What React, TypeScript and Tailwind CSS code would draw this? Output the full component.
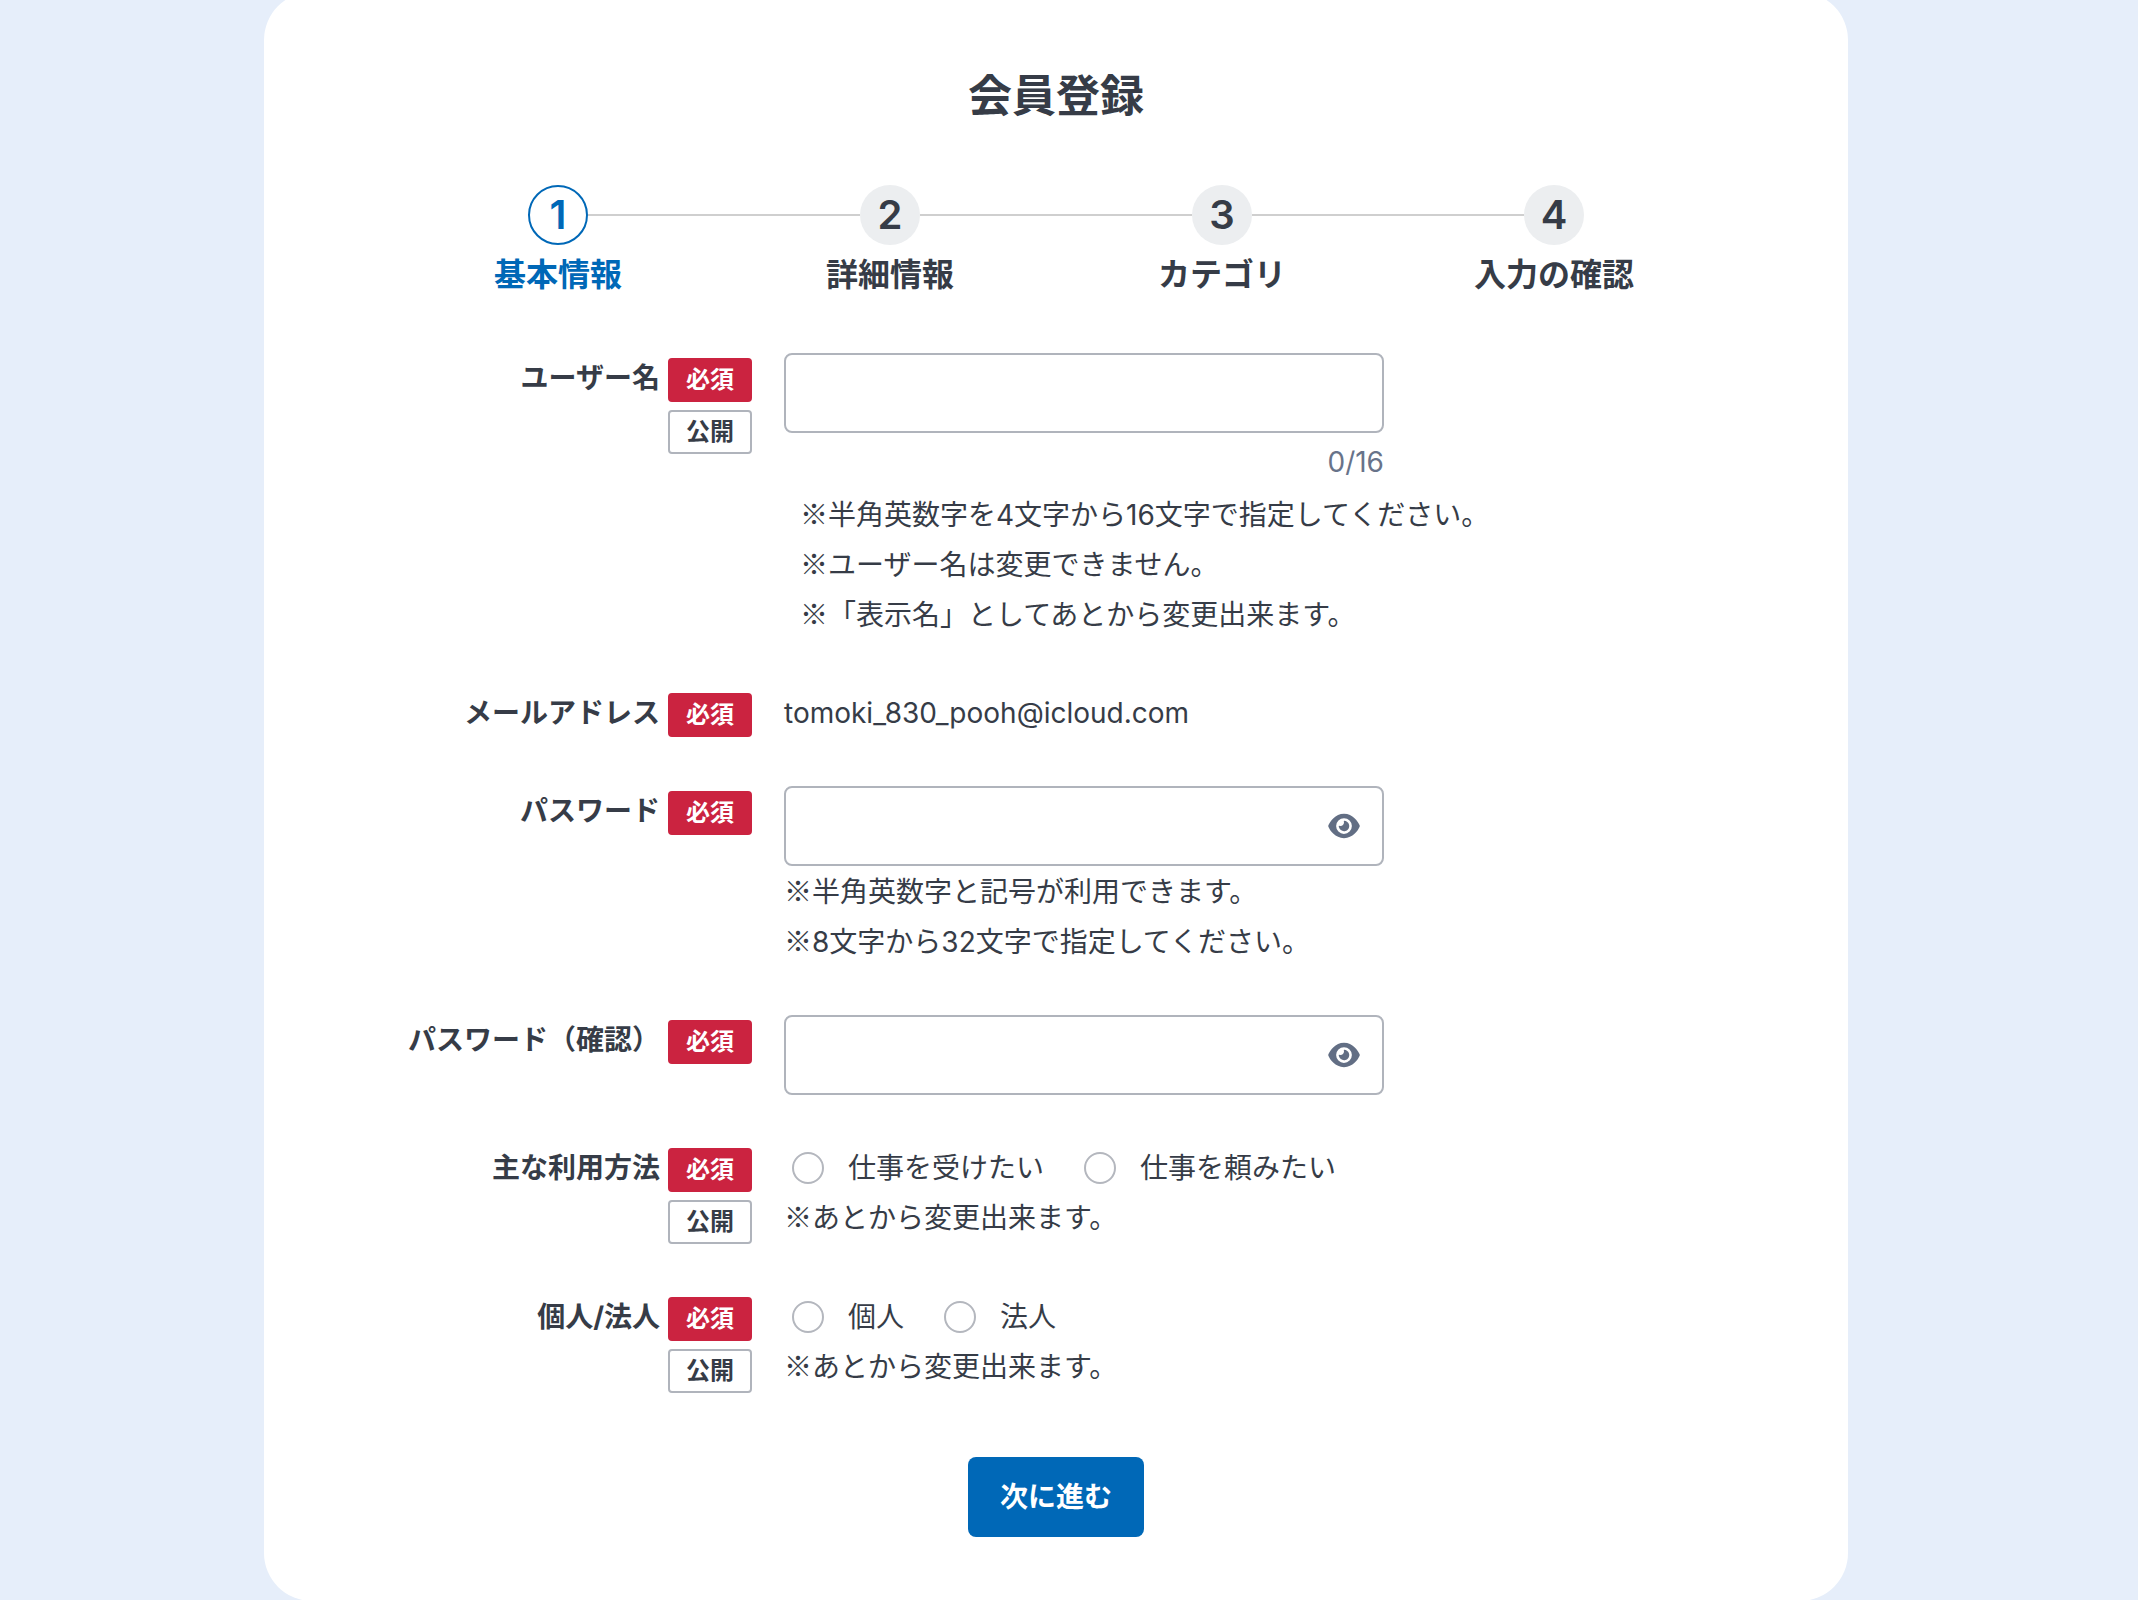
import { useState, type ReactNode } from 'react'
import { FaEye, FaEyeSlash } from 'react-icons/fa6'
import clsx from 'clsx'

const STEPS = ['基本情報', '詳細情報', 'カテゴリ', '入力の確認']
const MAX_USERNAME = 16

interface RowProps {
  id: string
  label: string
  isPublic?: boolean
  // radio groups are named through aria-labelledby, the rest through htmlFor
  group?: boolean
  children: ReactNode
}

function Row({ id, label, isPublic, group, children }: RowProps) {
  const labelClass = 'font-bold'
  return (
    <div className="grid grid-cols-[360px_minmax(0,1fr)] gap-8">
      <div className="flex items-start justify-end gap-2">
        {group ? (
          <span id={`${id}-label`} className={labelClass}>{label}</span>
        ) : (
          <label htmlFor={id} className={labelClass}>{label}</label>
        )}
        <div className="flex flex-col gap-2 pt-[5px] text-2xl leading-10 font-bold">
          <span className="rounded-sm border-2 border-[#cb2340] bg-[#cb2340] px-4 text-white">必須</span>
          {isPublic && <span className="rounded-sm border-2 border-[#b0b4bc] px-4">公開</span>}
        </div>
      </div>
      <div>{children}</div>
    </div>
  )
}

// Inter has its own, much smaller ※, so the mark is always set in the CJK face
function Note({ children }: { children: ReactNode }) {
  return (
    <p>
      <span className="font-['Noto_Sans_CJK_JP',sans-serif] leading-none">※</span>
      {children}
    </p>
  )
}

function PasswordInput({ id }: { id: string }) {
  const [visible, setVisible] = useState(false)
  return (
    <div className="flex h-20 max-w-[600px] items-center rounded-lg border-2 border-[#b0b4bc] pr-[22px]">
      <input
        id={id}
        type={visible ? 'text' : 'password'}
        className="h-full min-w-0 flex-1 rounded-lg px-4 outline-none"
      />
      <button
        type="button"
        aria-label="パスワードを表示"
        onClick={() => setVisible(v => !v)}
        className="text-[#626e84]"
      >
        {visible ? <FaEyeSlash className="h-7 w-8" /> : <FaEye className="h-7 w-8" />}
      </button>
    </div>
  )
}

function RadioGroup({ id, options }: { id: string; options: string[] }) {
  return (
    <div role="radiogroup" aria-labelledby={`${id}-label`} className="flex gap-10 pl-2">
      {options.map(option => (
        <label key={option} className="flex items-center gap-6">
          <input
            type="radio"
            name={id}
            value={option}
            className="size-8 appearance-none rounded-full border-2 border-[#b4b7be] bg-white checked:border-[10px] checked:border-[#0068b7]"
          />
          {option}
        </label>
      ))}
    </div>
  )
}

export default function App() {
  const [username, setUsername] = useState('')

  return (
    <div className="min-h-screen overflow-hidden bg-[#e6eefa] pr-[26px] font-[Inter,'Noto_Sans_CJK_JP',sans-serif] text-[28px] leading-[50px] text-[#363c47]">
      <main className="mx-auto -mt-2 -mb-0.5 max-w-[1584px] rounded-[48px] bg-white px-32 pt-[71px] pb-16">
        <h1 className="text-center text-[44px] leading-[66px] font-bold">会員登録</h1>

        <ol className="mt-14 grid grid-cols-4 text-[32px] leading-14 font-bold">
          {STEPS.map((step, i) => (
            <li key={step} aria-current={i === 0 ? 'step' : undefined} className={clsx(i === 0 && 'text-[#0068b7]')}>
              <div className="flex items-center">
                <span className={clsx('h-0.5 flex-1', i > 0 && 'bg-[#cfcfcf]')} />
                <span
                  className={clsx(
                    'flex size-15 items-center justify-center rounded-full text-[40px] font-semibold',
                    i === 0 ? 'border-2 border-[#0068b7]' : 'bg-[#eceef0]',
                  )}
                >
                  {i + 1}
                </span>
                <span className={clsx('h-0.5 flex-1', i < STEPS.length - 1 && 'bg-[#cfcfcf]')} />
              </div>
              <p className="mt-0.5 text-center">{step}</p>
            </li>
          ))}
        </ol>

        <form className="mt-[50px]" onSubmit={e => e.preventDefault()}>
          <div className="flex flex-col gap-12">
            <Row id="username" label="ユーザー名" isPublic>
              <div className="max-w-[600px]">
                <input
                  id="username"
                  type="text"
                  maxLength={MAX_USERNAME}
                  value={username}
                  onChange={e => setUsername(e.target.value)}
                  className="block h-20 w-full rounded-lg border-2 border-[#b0b4bc] px-4 outline-none"
                />
                <p className="mt-1 text-right text-[#68738a]">{username.length}/{MAX_USERNAME}</p>
              </div>
              <div className="pt-[3px] pl-4">
                <Note>半角英数字を4文字から16文字で指定してください。</Note>
                <Note>ユーザー名は変更できません。</Note>
                <Note>「表示名」としてあとから変更出来ます。</Note>
              </div>
            </Row>

            <Row id="email" label="メールアドレス">
              <output id="email" className="block">tomoki_830_pooh@icloud.com</output>
            </Row>

            <Row id="password" label="パスワード">
              <PasswordInput id="password" />
              <div className="pt-px">
                <Note>半角英数字と記号が利用できます。</Note>
                <Note>8文字から32文字で指定してください。</Note>
              </div>
            </Row>

            <Row id="password-confirm" label="パスワード（確認）">
              <PasswordInput id="password-confirm" />
            </Row>

            <Row id="usage" label="主な利用方法" isPublic group>
              <RadioGroup id="usage" options={['仕事を受けたい', '仕事を頼みたい']} />
              <Note>あとから変更出来ます。</Note>
            </Row>

            <Row id="entity" label="個人/法人" isPublic group>
              <RadioGroup id="entity" options={['個人', '法人']} />
              <Note>あとから変更出来ます。</Note>
            </Row>
          </div>

          <div className="mt-16 flex justify-center">
            <button type="submit" className="h-20 rounded-lg bg-[#0068b7] px-8 font-bold text-white">
              次に進む
            </button>
          </div>
        </form>
      </main>
    </div>
  )
}
